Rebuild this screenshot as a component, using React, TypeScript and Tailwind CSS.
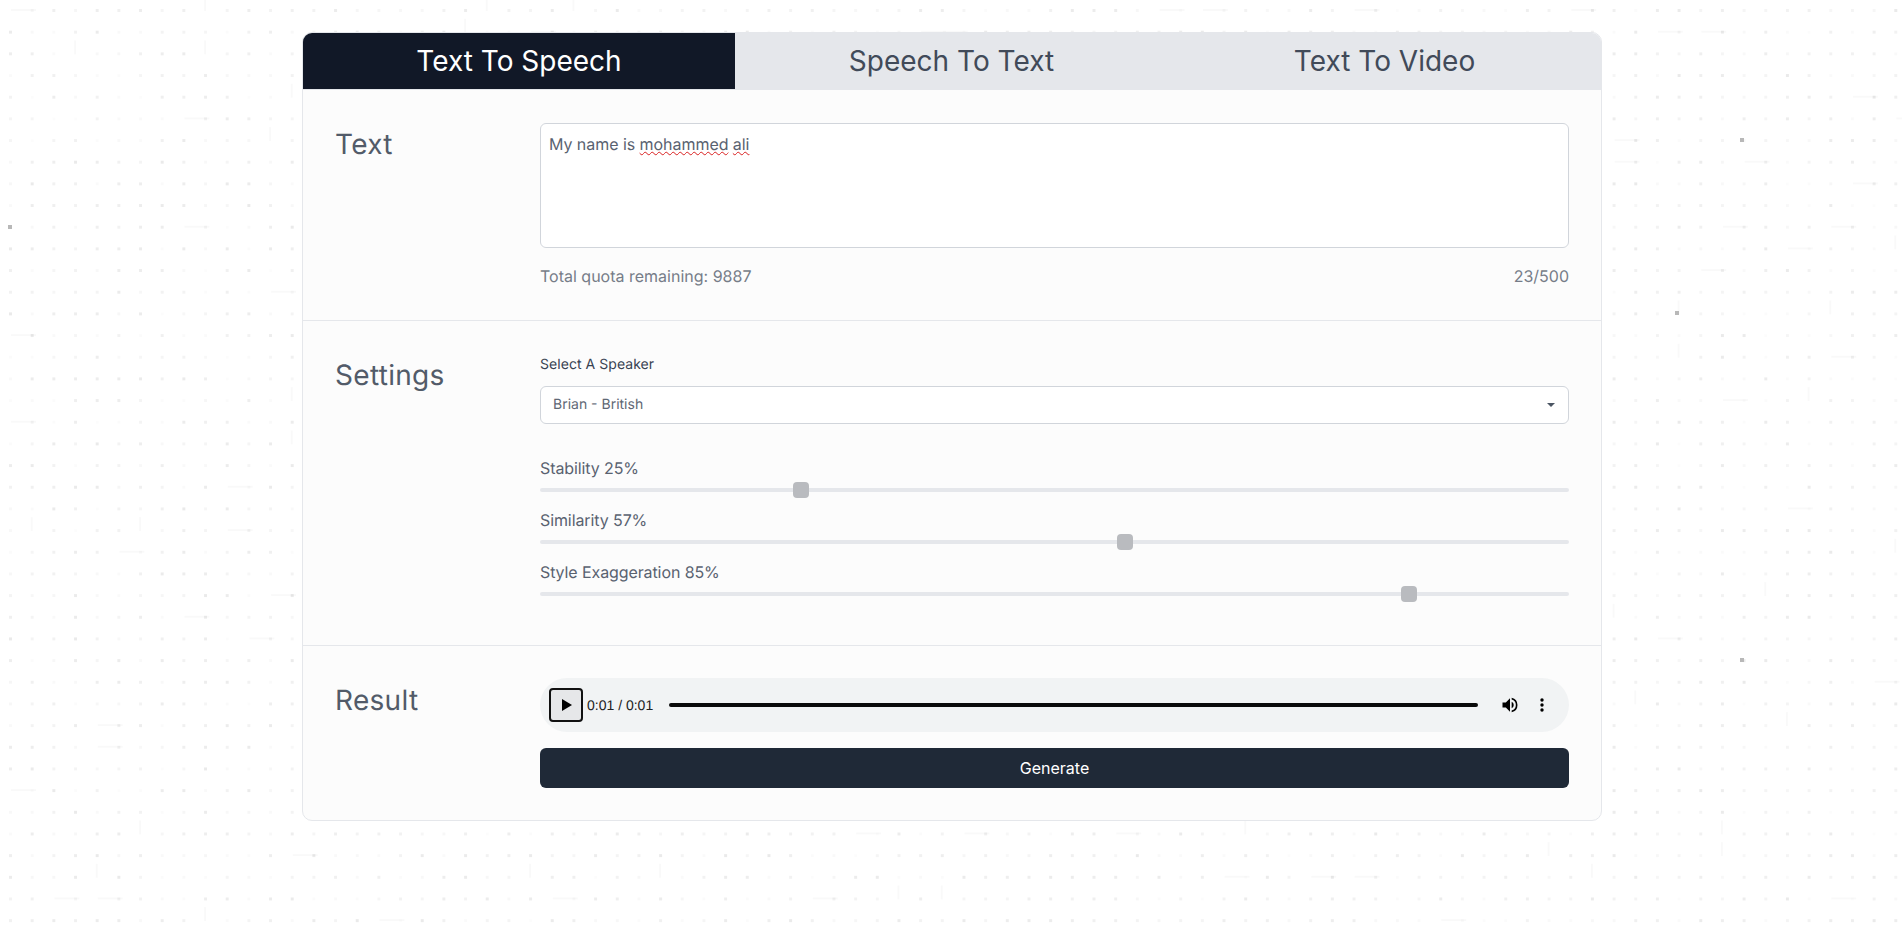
import { useMemo } from 'react';

const TABS = ['Text To Speech', 'Speech To Text', 'Text To Video'];

const SLIDERS = [
  { label: 'Stability', value: 25 },
  { label: 'Similarity', value: 57 },
  { label: 'Style Exaggeration', value: 85 },
];

const STEP = 21.67;

// faint dotted paper texture behind the card
function DotBackground() {
  const dots = useMemo(() => {
    const items: { x: number; y: number; w: number; h: number; o: number }[] = [];
    let seed = 7;
    const next = () => {
      seed = (seed * 16807) % 2147483647;
      return seed / 2147483647;
    };
    for (let row = 0; row < 44; row++) {
      for (let col = 0; col < 88; col++) {
        const x = 9 + col * STEP;
        const y = 9 + row * STEP;
        const r = next();
        if (r < 0.035) items.push({ x: x + 2, y: y, w: 25, h: 2, o: 0.025 });
        else if (r < 0.06) items.push({ x: x, y: y - 12, w: 2, h: 14, o: 0.025 });
        else items.push({ x, y, w: 3, h: 3, o: 0.012 + next() * 0.07 });
      }
    }
    return items;
  }, []);

  return (
    <svg className="absolute inset-0 -z-10 h-[935px] w-[1902px]" width="1902" height="935">
      {dots.map((d, i) => (
        <rect key={i} x={d.x} y={d.y} width={d.w} height={d.h} fill="#000" fillOpacity={d.o} />
      ))}
      <rect x="8" y="225" width="4" height="4" fill="#b8b8b8" />
      <rect x="1740" y="138" width="4" height="4" fill="#b8b8b8" />
      <rect x="1675" y="311" width="4" height="4" fill="#b8b8b8" />
      <rect x="1740" y="658" width="4" height="4" fill="#b8b8b8" />
    </svg>
  );
}

function Section({ title, children, last }: { title: string; children: React.ReactNode; last?: boolean }) {
  return (
    <div className={`flex px-8 pt-8 ${last ? 'pb-8' : 'border-b border-[#e5e7eb]'}`}>
      <h2 className="mt-1 w-[205px] shrink-0 text-[28px] leading-9 tracking-[0.3px] text-[#525b69]">{title}</h2>
      <div className="min-w-0 flex-1">{children}</div>
    </div>
  );
}

function Slider({ label, value }: { label: string; value: number }) {
  return (
    <div>
      <div className="text-base leading-6 tracking-[-0.1px] text-[#596270]">
        {label} {value}%
      </div>
      <input
        type="range"
        min={0}
        max={100}
        defaultValue={value}
        className="mt-2 mb-4 block h-1 w-full cursor-pointer appearance-none rounded bg-[#e5e7eb] [&::-webkit-slider-thumb]:h-4 [&::-webkit-slider-thumb]:w-4 [&::-webkit-slider-thumb]:appearance-none [&::-webkit-slider-thumb]:rounded [&::-webkit-slider-thumb]:bg-[#b9bbbf]"
      />
    </div>
  );
}

function AudioPlayer() {
  return (
    <div className="flex h-[54px] items-center rounded-full bg-[#f1f3f4] pl-[9px] pr-[25px] font-['Liberation_Sans',sans-serif] text-[#222]">
      <button className="flex h-[34px] w-[34px] items-center justify-center rounded border-2 border-[#111] bg-[#e6e7e9] pl-px">
        <svg width="10" height="12" viewBox="0 0 10 12">
          <path d="M0 0l10 6-10 6z" fill="#000" />
        </svg>
      </button>
      <span className="ml-1 text-sm">0:01 / 0:01</span>
      <div className="ml-4 h-1 flex-1 rounded-full bg-[#0a0a0a]" />
      <svg className="ml-[22px]" width="20" height="20" viewBox="0 0 24 24">
        <path
          d="M3 9v6h4l5 5V4L7 9H3zm13.5 3A4.5 4.5 0 0 0 14 7.97v8.05A4.5 4.5 0 0 0 16.5 12zM14 3.23v2.06a7 7 0 0 1 0 13.42v2.06a9 9 0 0 0 0-17.54z"
          fill="#000"
        />
      </svg>
      <svg className="ml-5" width="4" height="14" viewBox="0 0 4 14">
        <circle cx="2" cy="2" r="1.7" fill="#000" />
        <circle cx="2" cy="7" r="1.7" fill="#000" />
        <circle cx="2" cy="12" r="1.7" fill="#000" />
      </svg>
    </div>
  );
}

export default function App() {
  return (
    <div className="relative isolate min-h-[935px] overflow-hidden bg-white font-['Inter',sans-serif] [text-rendering:geometricPrecision]">
      <DotBackground />
      <div className="mx-auto w-[1300px] translate-x-px pt-8">
        <div className="overflow-hidden rounded-[10px] border border-[#e5e7eb] bg-[#fcfcfc]">
          <div className="flex border-b border-[#e5e7eb] bg-[#e5e7eb]">
            {TABS.map((tab, i) => (
              <button
                key={tab}
                className={`h-14 text-[28px] ${
                  i === 0 ? 'w-[432px] shrink-0 bg-[#111827] text-white' : 'flex-1 text-[#414a59]'
                }`}
              >
                {tab}
              </button>
            ))}
          </div>

          <Section title="Text">
            <div className="pt-px pb-8">
              <div className="h-[125px] rounded-md border border-[#d1d5db] bg-white p-2 text-base leading-6 tracking-[-0.05px] text-[#596270]">
                My name is{' '}
                <span className="underline decoration-[#d92020] decoration-wavy decoration-1">mohammed</span>{' '}
                <span className="underline decoration-[#d92020] decoration-wavy decoration-1">ali</span>
              </div>
              <div className="mt-4 flex justify-between text-base leading-6 text-[#767c88]">
                <span>Total quota remaining: 9887</span>
                <span>23/500</span>
              </div>
            </div>
          </Section>

          <Section title="Settings">
            <div className="pb-[33px]">
              <div className="mt-[2px] mb-[11px] text-sm leading-5 tracking-[0.05px] text-[#374151]">Select A Speaker</div>
              <div className="flex h-[38px] items-center justify-between rounded-md border border-[#d1d5db] bg-white pl-3 pr-[13px] text-sm text-[#5f6875]">
                <span>Brian - British</span>
                <svg width="8" height="4" viewBox="0 0 8 4">
                  <path d="M0 0h8L4 4z" fill="#4b5563" />
                </svg>
              </div>
              <div className="mt-8">
                {SLIDERS.map((s) => (
                  <Slider key={s.label} label={s.label} value={s.value} />
                ))}
              </div>
            </div>
          </Section>

          <Section title="Result" last>
            <AudioPlayer />
            <button className="mt-4 h-10 w-full rounded-md bg-[#1f2937] text-base text-white">Generate</button>
          </Section>
        </div>
      </div>
    </div>
  );
}
